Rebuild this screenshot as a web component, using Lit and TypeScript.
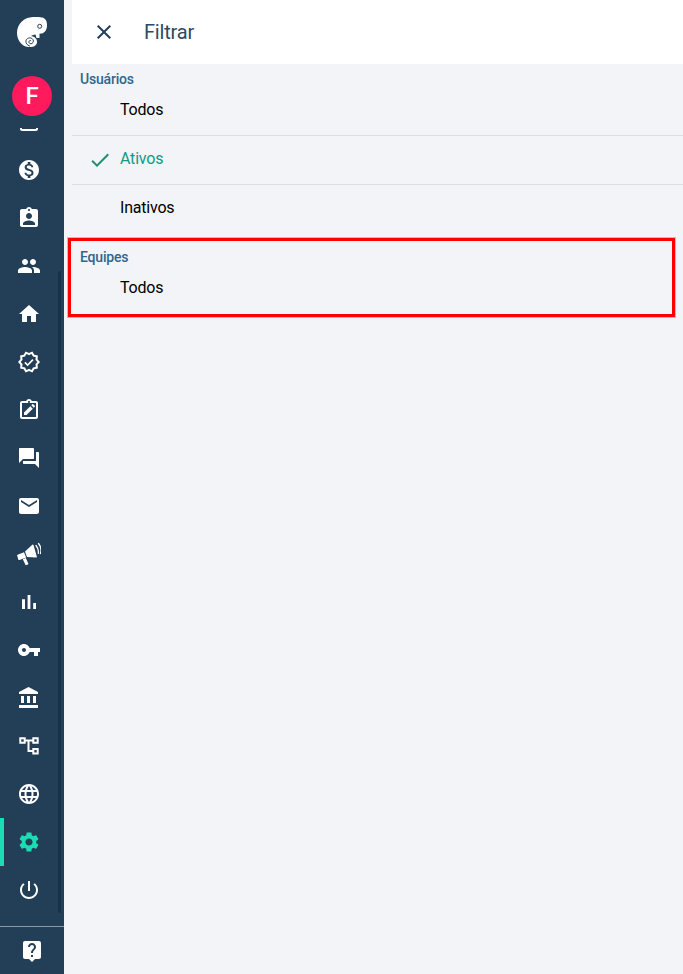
import { LitElement, html, css, svg } from "lit";
import { customElement } from "lit/decorators.js";

const P: Record<string, string> = {
  money: "M12 2C6.48 2 2 6.48 2 12s4.48 10 10 10 10-4.48 10-10S17.52 2 12 2zm1.41 16.09V20h-2.67v-1.93c-1.71-.36-3.16-1.46-3.27-3.4h1.96c.1 1.05.82 1.87 2.65 1.87 1.96 0 2.4-.98 2.4-1.59 0-.83-.44-1.61-2.67-2.14-2.48-.6-4.18-1.62-4.18-3.67 0-1.72 1.39-2.84 3.11-3.21V4h2.67v1.95c1.86.45 2.79 1.86 2.85 3.39H14.3c-.05-1.11-.64-1.87-2.22-1.87-1.5 0-2.4.68-2.4 1.64 0 .84.65 1.39 2.67 1.91s4.18 1.39 4.18 3.91c-.01 1.83-1.38 2.83-3.12 3.16z",
  badge: "M19 3h-4.18C14.4 1.84 13.3 1 12 1c-1.3 0-2.4.84-2.82 2H5c-1.1 0-2 .9-2 2v14c0 1.1.9 2 2 2h14c1.1 0 2-.9 2-2V5c0-1.1-.9-2-2-2zm-7 0c.55 0 1 .45 1 1s-.45 1-1 1-1-.45-1-1 .45-1 1-1zm0 4c1.66 0 3 1.34 3 3s-1.34 3-3 3-3-1.34-3-3 1.34-3 3-3zm6 12H6v-1.4c0-2 4-3.1 6-3.1s6 1.1 6 3.1V19z",
  people: "M16 11c1.66 0 2.99-1.34 2.99-3S17.66 5 16 5c-1.66 0-3 1.34-3 3s1.34 3 3 3zm-8 0c1.66 0 2.99-1.34 2.99-3S9.66 5 8 5C6.34 5 5 6.34 5 8s1.34 3 3 3zm0 2c-2.33 0-7 1.17-7 3.5V19h14v-2.5c0-2.33-4.67-3.5-7-3.5zm8 0c-.29 0-.62.02-.97.05 1.16.84 1.97 1.97 1.97 3.45V19h6v-2.5c0-2.33-4.67-3.5-7-3.5z",
  home: "M10 20v-6h4v6h5v-8h3L12 3 2 12h3v8z",
  verified: "M23 11.99l-2.44-2.79.34-3.69-3.61-.82L15.4 1.5 12 2.96 8.6 1.5 6.71 4.69 3.1 5.5l.34 3.7L1 11.99l2.44 2.79-.34 3.7 3.61.82L8.6 22.5l3.4-1.47 3.4 1.46 1.89-3.19 3.61-.82-.34-3.69 2.44-2.79zm-3.95 1.48l-.56.65.08.85.18 1.95-1.9.43-.84.19-.44.74-.99 1.68-1.78-.77-.8-.34-.79.34-1.78.77-.99-1.67-.44-.74-.84-.19-1.9-.43.18-1.96.08-.85-.56-.65L3.67 12l1.29-1.48.56-.65-.09-.85-.18-1.94 1.9-.43.84-.19.44-.74.99-1.68 1.78.77.8.34.79-.34 1.78-.77.99 1.68.44.74.84.19 1.9.43-.18 1.95-.08.85.56.65 1.29 1.47-1.28 1.48zM10.6 13.9l-2.1-2.1-1.2 1.2 3.3 3.3 6-6-1.2-1.2z",
  clip: "M19 3h-4.18C14.4 1.84 13.3 1 12 1c-1.3 0-2.4.84-2.82 2H5c-1.1 0-2 .9-2 2v14c0 1.1.9 2 2 2h14c1.1 0 2-.9 2-2V5c0-1.1-.9-2-2-2zm-7 0c.55 0 1 .45 1 1s-.45 1-1 1-1-.45-1-1 .45-1 1-1zM5 5h14v14H5V5zM7 17v-2.500l6.300-6.300 2.500 2.500L9.500 17H7zM14.300 7.200l1-1c.3-.3.7-.3 1 0l1.500 1.500c.3.3.3.7 0 1l-1 1-2.500-2.500z",
  forum: "M21 6h-2v9H6v2c0 .55.45 1 1 1h11l4 4V7c0-.55-.45-1-1-1zm-4 6V3c0-.55-.45-1-1-1H3c-.55 0-1 .45-1 1v14l4-4h10c.55 0 1-.45 1-1z",
  mail: "M20 4H4c-1.1 0-1.99.9-1.99 2L2 18c0 1.1.9 2 2 2h16c1.1 0 2-.9 2-2V6c0-1.1-.9-2-2-2zm0 4l-8 5-8-5V6l8 5 8-5v2z",
  chart: "M5 9.2h3V19H5zM10.6 5h2.8v14h-2.8zm5.6 8H19v6h-2.8z",
  key: "M12.65 10C11.83 7.67 9.61 6 7 6c-3.31 0-6 2.69-6 6s2.69 6 6 6c2.61 0 4.83-1.67 5.65-4H17v4h4v-4h2v-4H12.65zM7 14c-1.1 0-2-.9-2-2s.9-2 2-2 2 .9 2 2-.9 2-2 2z",
  bank: "M4 10v7h3v-7H4zm6 0v7h3v-7h-3zM2 22h19v-3H2v3zm14-12v7h3v-7h-3zm-4.5-9L2 6v2h19V6l-9.5-5z",
  tree: "M2.300 3.300h6.400v2.200h6.600V3.300h6.400v6.400h-6.400V7.500h-2.800V16h2.800v-2h6.400v6.400h-6.400V18h-4.800V7.500H8.700v2.200H2.300zM4.300 5.300v2.400h2.400V5.300zM17.300 5.300v2.400h2.400V5.300zM17.300 16v2.400h2.400V16z",
  globe: "M11.99 2C6.47 2 2 6.48 2 12s4.47 10 9.99 10C17.52 22 22 17.52 22 12S17.52 2 11.99 2zm6.93 6h-2.95c-.32-1.25-.78-2.45-1.38-3.56 1.84.63 3.37 1.91 4.33 3.56zM12 4.04c.83 1.2 1.48 2.53 1.91 3.96h-3.82c.43-1.43 1.08-2.76 1.91-3.96zM4.26 14C4.1 13.36 4 12.69 4 12s.1-1.36.26-2h3.38c-.08.66-.14 1.32-.14 2 0 .68.06 1.34.14 2H4.26zm.82 2h2.95c.32 1.25.78 2.45 1.38 3.56-1.84-.63-3.37-1.9-4.33-3.56zm2.95-8H5.08c.96-1.66 2.49-2.93 4.33-3.56C8.81 5.55 8.35 6.75 8.03 8zM12 19.96c-.83-1.2-1.48-2.53-1.91-3.96h3.82c-.43 1.43-1.08 2.76-1.91 3.96zM14.34 14H9.66c-.09-.66-.16-1.32-.16-2 0-.68.07-1.35.16-2h4.68c.09.65.16 1.32.16 2 0 .68-.07 1.34-.16 2zm.25 5.56c.6-1.11 1.06-2.31 1.38-3.56h2.95c-.96 1.65-2.49 2.93-4.33 3.56zM16.36 14c.08-.66.14-1.32.14-2 0-.68-.06-1.34-.14-2h3.38c.16.64.26 1.31.26 2s-.1 1.36-.26 2h-3.38z",
  gear: "M19.14 12.94c.04-.3.06-.61.06-.94 0-.32-.02-.64-.07-.94l2.03-1.58c.18-.14.23-.41.12-.61l-1.92-3.32c-.12-.22-.37-.29-.59-.22l-2.39.96c-.5-.38-1.03-.7-1.62-.94l-.36-2.54c-.04-.24-.24-.41-.48-.41h-3.84c-.24 0-.43.17-.47.41l-.36 2.54c-.59.24-1.13.57-1.62.94l-2.39-.96c-.22-.08-.47 0-.59.22L2.74 8.87c-.12.21-.08.47.12.61l2.03 1.58c-.05.3-.09.63-.09.94s.02.64.07.94l-2.03 1.58c-.18.14-.23.41-.12.61l1.92 3.32c.12.22.37.29.59.22l2.39-.96c.5.38 1.03.7 1.62.94l.36 2.54c.05.24.24.41.48.41h3.84c.24 0 .44-.17.47-.41l.36-2.54c.59-.24 1.13-.56 1.62-.94l2.39.96c.22.08.47 0 .59-.22l1.92-3.32c.12-.22.07-.47-.12-.61l-2.01-1.58zM12 15.6c-1.98 0-3.6-1.62-3.6-3.6s1.62-3.6 3.6-3.6 3.6 1.62 3.6 3.6-1.62 3.6-3.6 3.6z",
  power: "M13 3h-2v10h2V3zm4.83 2.17l-1.42 1.42C17.99 7.86 19 9.81 19 12c0 3.87-3.13 7-7 7s-7-3.13-7-7c0-2.19 1.01-4.14 2.58-5.42L6.17 5.17C4.23 6.82 3 9.26 3 12c0 4.97 4.03 9 9 9s9-4.03 9-9c0-2.74-1.23-5.18-3.17-6.83z",
  help: "M19 2H5c-1.11 0-2 .9-2 2v14c0 1.1.89 2 2 2h4l3 3 3-3h4c1.1 0 2-.9 2-2V4c0-1.1-.9-2-2-2zm-6 16h-2v-2h2v2zm2.07-7.75l-.9.92C13.45 11.9 13 12.5 13 14h-2v-.5c0-1.1.45-2.1 1.17-2.83l1.24-1.26c.37-.36.59-.86.59-1.41 0-1.1-.9-2-2-2s-2 .9-2 2H8c0-2.21 1.79-4 4-4s4 1.79 4 4c0 .88-.36 1.68-.93 2.25z",
  close: "M19 6.41L17.59 5 12 10.59 6.41 5 5 6.41 10.59 12 5 17.59 6.41 19 12 13.41 17.59 19 19 17.59 13.41 12z",
  check: "M9 16.17L4.83 12l-1.42 1.41L9 19 21 7l-1.41-1.41z",
  horn: "M.6 12.800L7 10.200l2.200 5.200-6.700 2.600c-.6.2-1 0-1.200-.5L.2 13.700c-.2-.4 0-.7.4-.9zM8 9.500l7.300-6.700c.5-.4 1-.3 1.200.3l3.300 11.500c.2.7-.2 1-.8 1L10 15zM5.800 17.300l3-1.200 2.500 5.500c.2.4 0 .7-.3.800l-1.800.7c-.4.1-.7 0-.8-.4z",
};

const WAVES = "M19 3.500c1.800 2.200 2.700 5 2.300 7.800M21.500 1.500c2.300 2.800 3 6.500 2 10";

const ic = (name: string) =>
  html`<svg viewBox="0 0 24 24" width="24" height="24" aria-hidden="true">${svg`<path d=${P[name]}></path>`}${name === "horn" ? svg`<path d=${WAVES} fill="none" stroke="currentColor" stroke-width="1.300" stroke-linecap="round"></path>` : ""}</svg>`;

const NAV = ["money", "badge", "people", "home", "verified", "clip", "forum", "mail", "horn", "chart", "key", "bank", "tree", "globe", "gear", "power"];

@customElement("app-root")
export class AppRoot extends LitElement {
  static styles = css`
    :host { display: block; height: 974px; width: 683px; overflow: hidden; position: relative; font-family: Roboto, sans-serif; background: #f2f4f8; }
    svg { display: block; fill: currentColor; }
    .shell { display: flex; height: 100%; }
    .side { width: 64px; flex: none; background: #233f58; color: #fff; display: flex; flex-direction: column; position: relative; }
    .logo { height: 64px; flex: none; display: flex; align-items: center; justify-content: center; }
    .avatar { width: 40px; height: 40px; border-radius: 50%; background: #ff1a5e; margin: 12px 0 0 12px; flex: none; display: flex; align-items: center; justify-content: center; font-size: 24px; font-weight: 500; line-height: 1; position: relative; z-index: 1; }
    .scroller { flex: 1; min-height: 0; overflow: hidden; position: relative; margin-top: 12px; }
    .list { display: flex; flex-direction: column; margin-top: -30px; }
    .nav { height: 48px; flex: none; display: flex; align-items: center; padding-left: 17px; position: relative; }
    .nav.on { color: #1cdcb4; }
    .nav.on::before { content: ""; position: absolute; left: 0; top: 0; bottom: 0; width: 4px; background: #1cdcb4; }
    .thumb { position: absolute; left: 58px; top: 143px; width: 3px; height: 642px; background: #16324a; border-radius: 2px; }
    .foot { height: 47px; flex: none; border-top: 1px solid #8e9aa6; display: flex; align-items: center; padding-left: 20px; }
    .main { flex: 1; min-width: 0; display: flex; flex-direction: column; margin-left: 8px; }
    .head { height: 64px; flex: none; background: #fff; display: flex; align-items: center; padding-left: 20px; gap: 28px; color: #233f58; }
    .title { font-size: 20px; color: #2c4a62; letter-spacing: -0.2px; }
    .label { font-size: 14px; font-weight: 500; color: #2f6690; line-height: 16px; padding: 7px 0 0 8px; letter-spacing: -0.2px; }
    .row { box-sizing: border-box; height: 49px; padding: 11px 0 0 48px; font-size: 16px; line-height: 24px; color: #000; position: relative; letter-spacing: -0.2px; }
    .row.line { border-bottom: 1px solid #dcdee2; }
    .row.sel { color: #0c9c88; }
    .row.sel svg { position: absolute; left: 16px; top: 12px; color: #1f8f6f; }
    .gap { height: 8px; flex: none; }
    .mark { position: absolute; left: 68px; top: 238px; width: 607px; height: 79px; box-sizing: border-box; border: 3px solid #ff0000; box-shadow: 0 0 0 1px rgba(255, 0, 0, 0.3); pointer-events: none; }
  `;

  render() {
    return html`
      <div class="shell">
        <aside class="side">
          <div class="logo">
            <svg viewBox="0 0 32 32" width="32" height="32" aria-hidden="true">
              <path d="M12 31C5.500 30 1 24 1 17 1 8 8 1.200 17 1c3-.1 6 0 9 .5C29.500 2.200 31 5 31 9c0 4.500-2 8-5.500 8.500l-2 .2V22h-3l-1-3.500c-1.500.3-3.500.7-4.500 1.500 3.500.5 6.500 3 6 6.500-.5 3.500-4 5-9 4.500z"></path>
              <circle cx="23.700" cy="10.300" r="2" fill="none" stroke="#233f58" stroke-width="1"></circle>
              <path d="M13.500 30c-2.500-.8-4-3-3.500-5.300.6-2.600 3.800-3.600 6-2.200 1.900 1.300 1.900 4-.1 5-1.500.7-3.200-.3-3-1.800.1-1 1.100-1.500 1.900-1.100" fill="none" stroke="#233f58" stroke-width="1" stroke-linecap="round"></path>
            </svg>
          </div>
          <div class="avatar">F</div>
          <div class="scroller">
            <div class="list">
              <div class="nav">${ic("clip")}</div>
              ${NAV.map((n) => html`<div class="nav ${n === "gear" ? "on" : ""}">${ic(n)}</div>`)}
            </div>
            <div class="thumb"></div>
          </div>
          <div class="foot">${ic("help")}</div>
        </aside>
        <main class="main">
          <header class="head">${ic("close")}<span class="title">Filtrar</span></header>
          <div class="label">Usuários</div>
          <div class="row line">Todos</div>
          <div class="row line sel">${ic("check")}<span>Ativos</span></div>
          <div class="row">Inativos</div>
          <div class="gap"></div>
          <div class="label">Equipes</div>
          <div class="row">Todos</div>
        </main>
      </div>
      <div class="mark"></div>
    `;
  }
}
